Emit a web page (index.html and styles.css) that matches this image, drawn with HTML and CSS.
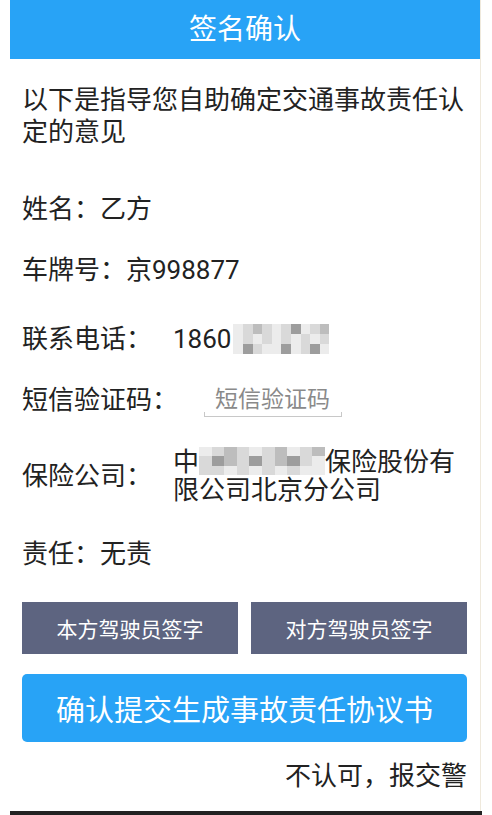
FILE: index.html
```html
<!DOCTYPE html>
<html lang="zh-CN">
<head>
<meta charset="utf-8">
<title>签名确认</title>
<link rel="stylesheet" href="styles.css">
</head>
<body>
<div class="frame">
  <header class="header">签名确认</header>
  <main class="content">
    <p class="intro">以下是指导您自助确定交通事故责任认定的意见</p>
    <div class="row r-name">姓名：乙方</div>
    <div class="row r-plate">车牌号：京998877</div>
    <div class="row r-phone">
      <span class="label">联系电话：</span>
      <span class="value">1860<span class="mosaic mosaic-phone"><i class="c1"></i><i class="c2"></i><i class="c3"></i><i class="c2"></i><i class="c1"></i><i class="c2"></i><i class="c4"></i><i class="c1"></i><i class="c2"></i><i class="c3"></i><i class="c1"></i><i class="c2"></i><i class="c1"></i><i class="c2"></i><i class="c1"></i><i class="c2"></i><i class="c1"></i><i class="c2"></i><i class="c1"></i><i class="c2"></i><i class="c1"></i><i class="c4"></i><i class="c2"></i><i class="c1"></i><i class="c1"></i><i class="c4"></i><i class="c1"></i><i class="c2"></i><i class="c4"></i><i class="c1"></i></span></span>
    </div>
    <div class="row r-sms">
      <span class="label label-sms">短信验证码：</span>
      <span class="sms-input">短信验证码</span>
    </div>
    <div class="row r-ins">
      <span class="label label-ins">保险公司：</span>
      <span class="value value-ins">中<span class="mosaic mosaic-ins"><i class="c1"></i><i class="c2"></i><i class="c3"></i><i class="c2"></i><i class="c1"></i><i class="c2"></i><i class="c3"></i><i class="c1"></i><i class="c2"></i><i class="c3"></i><i class="c2"></i><i class="c4"></i><i class="c3"></i><i class="c2"></i><i class="c4"></i><i class="c2"></i><i class="c3"></i><i class="c4"></i><i class="c2"></i><i class="c1"></i><i class="c2"></i><i class="c2"></i><i class="c1"></i><i class="c2"></i><i class="c1"></i><i class="c2"></i><i class="c1"></i><i class="c2"></i><i class="c1"></i><i class="c1"></i></span>保险股份有限公司北京分公司</span>
    </div>
    <div class="row r-duty">责任：无责</div>
    <div class="sign-row">
      <button class="sign-btn">本方驾驶员签字</button>
      <button class="sign-btn">对方驾驶员签字</button>
    </div>
    <button class="submit-btn">确认提交生成事故责任协议书</button>
    <div class="reject">不认可，报交警</div>
  </main>
</div>
<div class="bottom-bar"></div>
</body>
</html>
```

FILE: styles.css
```css
html, body {
  margin: 0;
  padding: 0;
  background: #ffffff;
}
body {
  width: 492px;
  height: 815px;
  overflow: hidden;
  font-family: Roboto, "Noto Sans CJK SC", sans-serif;
  color: #222222;
}
.frame {
  margin-left: 10px;
  width: 471px;
  height: 811px;
  border-right: 1px solid #efe9dc;
  box-sizing: border-box;
  display: flex;
  flex-direction: column;
}
.header {
  height: 59px;
  width: 470px;
  background: #28a3f6;
  color: #ffffff;
  font-size: 28px;
  line-height: 59px;
  text-align: center;
}
.content {
  padding: 0 14px 0 12px;
  display: flex;
  flex-direction: column;
}
.intro {
  margin: 25px 0 0 0;
  font-size: 26px;
  line-height: 32px;
}
.row {
  font-size: 26px;
  line-height: 32px;
  display: flex;
  align-items: center;
}
.r-name { margin-top: 45px; }
.r-plate { margin-top: 29px; }
.r-phone { margin-top: 37px; }
.r-sms { margin-top: 29px; height: 32px; }
.r-ins { margin-top: 32px; }
.r-duty { margin-top: 34px; }
.label {
  width: 151px;
  flex: none;
}
.label-sms {
  width: 182px;
}
.value {
  display: flex;
  align-items: center;
}
.value-ins {
  display: block;
  line-height: 28px;
  width: 290px;
}
.mosaic {
  display: inline-grid;
  grid-template-columns: repeat(10, 1fr);
  grid-template-rows: repeat(3, 1fr);
  vertical-align: middle;
}
.mosaic-phone {
  width: 96px;
  height: 30px;
  margin-left: 2px;
}
.mosaic-ins {
  width: 126px;
  height: 28px;
  margin-top: -6px;
}
.mosaic i { display: block; }
.mosaic .c1 { background: #ececec; }
.mosaic .c2 { background: #d9d9d9; }
.mosaic .c3 { background: #bdbdbd; }
.mosaic .c4 { background: #9d9d9d; }
.sms-input {
  position: relative;
  width: 138px;
  height: 32px;
  box-sizing: border-box;
  padding-left: 11px;
  font-size: 23px;
  line-height: 31px;
  color: #8a8a8a;
}
.sms-input::after {
  content: "";
  position: absolute;
  left: 0;
  right: 0;
  bottom: -1px;
  height: 4px;
  border: 1px solid #c8c8c8;
  border-top: none;
}
.sign-row {
  margin-top: 32px;
  display: flex;
  gap: 13px;
  width: 445px;
}
.sign-btn {
  flex: 1;
  height: 52px;
  border: none;
  margin: 0;
  padding: 0;
  background: #5d6480;
  color: #ffffff;
  font-family: Roboto, "Noto Sans CJK SC", sans-serif;
  font-size: 21px;
}
.submit-btn {
  margin-top: 20px;
  width: 445px;
  height: 68px;
  border: none;
  padding: 0;
  border-radius: 5px;
  background: #28a3f6;
  color: #ffffff;
  font-family: Roboto, "Noto Sans CJK SC", sans-serif;
  font-size: 29px;
}
.reject {
  margin-top: 18px;
  width: 445px;
  text-align: right;
  font-size: 26px;
  line-height: 32px;
}
.bottom-bar {
  margin-left: 10px;
  width: 472px;
  height: 4px;
  background: #222222;
}
```
